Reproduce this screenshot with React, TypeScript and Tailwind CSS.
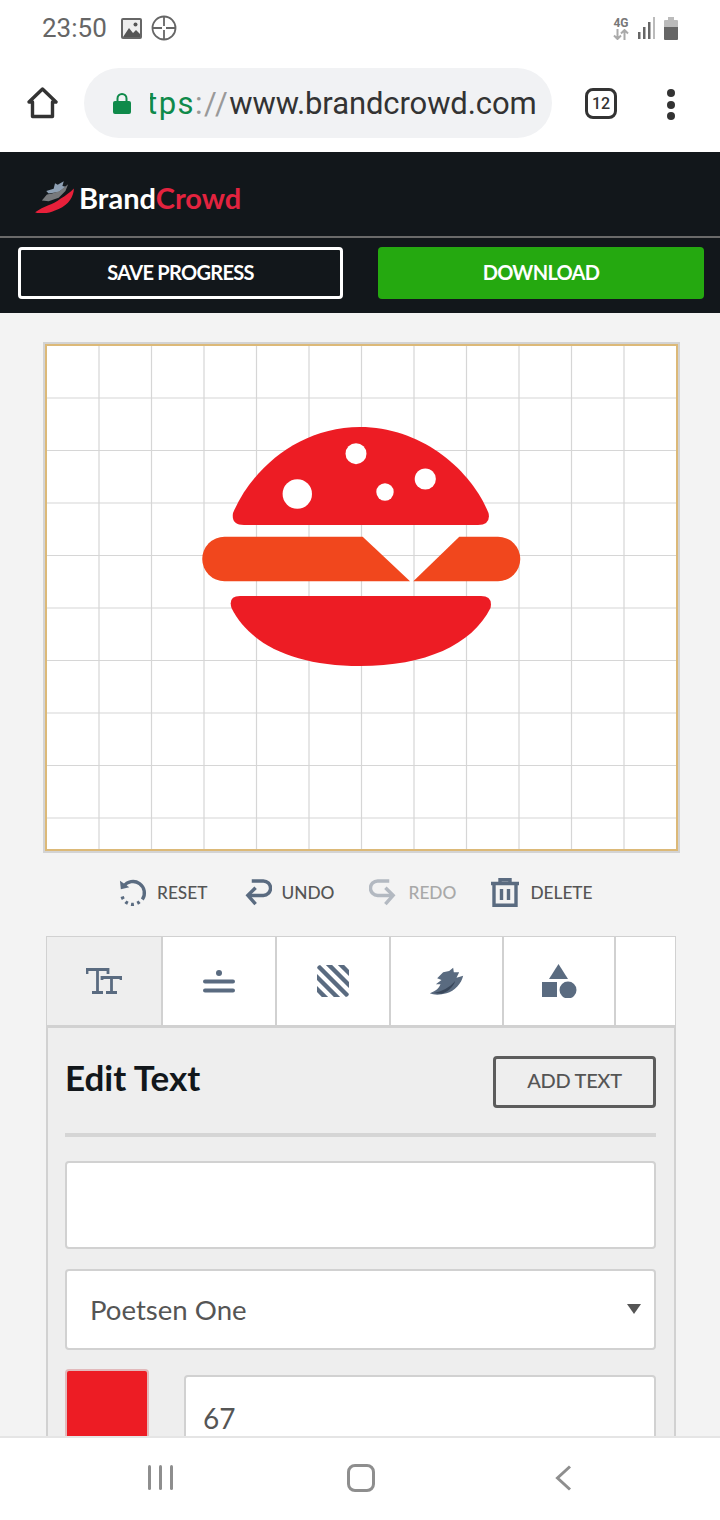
const gridX = [99, 151.5, 204, 256.5, 309, 361.5, 414, 466.5, 519, 571.5, 624]
const gridY = [398, 450.5, 503, 555.5, 608, 660.5, 713, 765.5, 818]

function Burger() {
  return (
    <svg viewBox="47 346 629 503" className="block h-full w-full">
      {gridX.map((x) => (
        <line key={x} x1={x} x2={x} y1={346} y2={849} stroke="#d6d6d6" strokeWidth={1.2} />
      ))}
      {gridY.map((y) => (
        <line key={y} x1={47} x2={676} y1={y} y2={y} stroke="#d6d6d6" strokeWidth={1.2} />
      ))}
      <path d="M244 525 Q231 525 233 513 C252 468 300 427 360 427 C420 427 470 468 488.5 513 Q491 525 478 525 Z" fill="#ed1c24" />
      <circle cx={356} cy={453.7} r={10.5} fill="#fff" />
      <circle cx={297.3} cy={494} r={14.7} fill="#fff" />
      <circle cx={385} cy={492} r={8.7} fill="#fff" />
      <circle cx={425.3} cy={479} r={10.6} fill="#fff" />
      <path d="M224.5 536.7 H362.7 L410 581.3 H224.5 A22.3 22.3 0 0 1 224.5 536.7 Z" fill="#f1471d" />
      <path d="M459.3 536.7 H498 A22.3 22.3 0 0 1 498 581.3 H413.3 Z" fill="#f1471d" />
      <path d="M240 596 H481 Q493 596 490.5 608 C472 645 425 666 360 666 C295 666 250 645 231.5 608 Q228 596 240 596 Z" fill="#ed1c24" />
    </svg>
  )
}

function Feather() {
  return (
    <svg viewBox="58 56 104 84" className="h-[28px] w-[35px]">
      <path
        d="M60 135 C80 128 88 118 92 108 L78 108 L95 95 L82 90 L100 72 L118 68 L130 58 L132 72 L148 72 L140 88 L160 82 C155 105 135 128 110 135 C90 141 70 140 60 135 Z"
        fill="#5a6b80"
      />
      <path d="M72 134 C95 130 120 118 136 98 C130 118 112 132 95 136 Z" fill="#39475a" />
    </svg>
  )
}

function ToolAction({ label, dim, gap, children }: { label: string; dim?: boolean; gap: string; children: React.ReactNode }) {
  return (
    <div className={`flex items-center ${gap}`}>
      {children}
      <span className={`mt-[2px] text-[17.3px] font-medium ${dim ? "text-[#a9a9a9]" : "text-[#555]"}`}>{label}</span>
    </div>
  )
}

export default function App() {
  return (
    <div className="flex h-[1520px] w-[720px] flex-col overflow-hidden bg-[#f3f3f3] font-['Lato',sans-serif]">
      {/* phone status bar */}
      <div className="flex h-[56px] shrink-0 items-center bg-white pl-[42px] pr-[42px]">
        <span className="font-['Roboto',sans-serif] text-[26px] text-[#666]">23:50</span>
        <svg viewBox="0 0 21 21" className="ml-[14px] h-[21px] w-[21px]">
          <rect width="21" height="21" rx="2" fill="#666" />
          <rect x="2" y="2" width="17" height="17" fill="#eee" />
          <path d="M2 19 L8 10 L12 15 L15 12 L19 16 V19 Z" fill="#555" />
          <circle cx="14.5" cy="6.5" r="2" fill="#555" />
        </svg>
        <svg viewBox="0 0 26 26" className="ml-[9px] h-[26px] w-[26px]" fill="none" stroke="#666" strokeWidth="1.8">
          <circle cx="13" cy="13" r="11.5" />
          <path d="M13 1 V11 M13 15 V25 M1 13 H11 M15 13 H25" />
        </svg>
        <div className="ml-auto flex items-center">
          <div className="flex flex-col items-center leading-none">
            <span className="font-['Roboto',sans-serif] text-[12px] font-bold leading-[12px] text-[#777]">4G</span>
            <svg viewBox="0 0 16 11" className="h-[11px] w-[16px]" fill="none" stroke="#aaa" strokeWidth="2">
              <path d="M4.5 0 V10 M1 6.5 L4.5 10 L8 6.5 M11.5 11 V1 M8 4.5 L11.5 1 L15 4.5" />
            </svg>
          </div>
          <svg viewBox="0 0 18 22" className="ml-[8px] h-[22px] w-[18px]">
            <rect x="1" y="15" width="2.5" height="7" fill="#666" />
            <rect x="6" y="10" width="2.5" height="12" fill="#666" />
            <rect x="11" y="5" width="2.5" height="17" fill="#666" />
            <rect x="16" y="0" width="2" height="22" fill="#bbb" />
          </svg>
          <svg viewBox="0 0 14 23" className="ml-[9px] h-[23px] w-[14px]">
            <path d="M4 0 H10 V3 H13 Q14 3 14 4 V10 H0 V4 Q0 3 1 3 H4 Z" fill="#bbb" />
            <path d="M0 10 H14 V22 Q14 23 13 23 H1 Q0 23 0 22 Z" fill="#666" />
          </svg>
        </div>
      </div>

      {/* browser toolbar */}
      <div className="flex h-[96px] shrink-0 items-start bg-white pt-[12px]">
        <svg viewBox="0 0 32 32" className="ml-[27px] mt-[19px] h-[32px] w-[32px]" fill="none" stroke="#333" strokeWidth="3.4" strokeLinejoin="round">
          <path d="M2 15 L15.5 2 L29 15 H25.5 V29.5 H5.5 V15 Z" />
        </svg>
        <div className="ml-[25px] flex h-[70px] w-[468px] items-center overflow-hidden rounded-[35px] bg-[#f1f2f4] pl-[29px]">
          <svg viewBox="0 0 18 21" className="h-[21px] w-[18px] shrink-0">
            <path d="M4.5 9 V5.5 A4.5 4.5 0 0 1 13.5 5.5 V9" fill="none" stroke="#0f8a4a" strokeWidth="2" />
            <rect x="0" y="8" width="18" height="13" rx="2" fill="#0f8a4a" />
          </svg>
          <div className="ml-[19px] overflow-hidden pt-[2px]">
            <span className="-ml-[3px] block whitespace-nowrap font-['Roboto',sans-serif] text-[31px] tracking-[-0.1px] text-[#333]">
              <span className="tracking-[1.5px] text-[#0f8a4a]">tps</span>
              <span className="tracking-[1.5px] text-[#999]">://</span>
              www.brandcrowd.com
            </span>
          </div>
        </div>
        <div className="ml-[33px] mt-[20px] flex h-[31px] w-[32px] items-center justify-center rounded-[8px] border-[3px] border-[#333] font-['Roboto',sans-serif] text-[16px] font-medium text-[#333]">
          12
        </div>
        <div className="ml-[50px] mt-[21px] flex flex-col gap-[3.5px]">
          <span className="h-[8px] w-[8px] rounded-full bg-[#333]" />
          <span className="h-[8px] w-[8px] rounded-full bg-[#333]" />
          <span className="h-[8px] w-[8px] rounded-full bg-[#333]" />
        </div>
      </div>

      {/* brandcrowd header */}
      <div className="shrink-0 bg-[#12171b]">
        <div className="flex h-[86px] items-center border-b-2 border-[#6a6a6a] pl-[35px] pt-[6px]">
          <svg viewBox="45 35 115 95" className="h-[32px] w-[39px] shrink-0">
            <path d="M78 65 L100 58 L104 42 L112 46 L130 36 L126 50 L136 52 L115 68 L85 72 Z" fill="#8ea0b4" />
            <path d="M65 93 L80 75 L95 72 L118 65 L143 45 L135 65 L115 85 L85 95 Z" fill="#77797c" />
            <path d="M45 128 C70 110 100 105 120 88 C135 78 150 68 160 57 C160 80 145 105 115 118 C90 130 65 135 45 128 Z" fill="#e8203a" />
          </svg>
          <span className="ml-[5px] text-[29px] font-bold leading-none text-white">
            Brand<span className="text-[#e2233f]">Crowd</span>
          </span>
        </div>
        <div className="flex items-start justify-between pb-[14px] pl-[18px] pr-[16px] pt-[9px]">
          <button className="h-[52px] w-[325px] rounded-[4px] border-[3px] border-white pb-[2px] text-[20px] font-bold tracking-[-0.7px] text-white">
            SAVE PROGRESS
          </button>
          <button className="h-[52px] w-[326px] rounded-[4px] bg-[#25a910] pb-[2px] text-[20px] font-bold tracking-[-0.7px] text-white">
            DOWNLOAD
          </button>
        </div>
      </div>

      {/* editor */}
      <div className="min-h-0 flex-1 overflow-hidden">
        <div className="ml-[45px] mt-[31px] h-[507px] w-[633px] border-2 border-[#dcb978] bg-white ring-2 ring-[#d3d3d3]">
          <Burger />
        </div>

        <div className="ml-[119px] mt-[26px] flex h-[30px] items-center">
          <ToolAction label="RESET" gap="gap-[10px]">
            <svg viewBox="0 0 30 28" className="h-[28px] w-[28px]" fill="none" stroke="#5a6b80" strokeWidth="3.6">
              <path d="M5 8 A11.5 11.5 0 1 1 25 22" />
              <path d="M1 2 L2 11 L11 9 Z" fill="#5a6b80" stroke="none" />
              <path d="M22 24.5 A11.5 11.5 0 0 1 3 16" strokeDasharray="3 3.6" />
            </svg>
          </ToolAction>
          <div className="ml-[37px]">
            <ToolAction label="UNDO" gap="gap-[10px]">
              <svg viewBox="0 0 28 28" className="h-[27px] w-[27px]" fill="none" stroke="#5a6b80" strokeWidth="3.6">
                <path d="M7 2 H19 A7.5 7.5 0 0 1 19 17 H4" />
                <path d="M11 9 L3 17 L11 26" />
              </svg>
            </ToolAction>
          </div>
          <div className="ml-[35px]">
            <ToolAction label="REDO" dim gap="gap-[12px]">
              <svg viewBox="0 0 28 28" className="h-[27px] w-[27px]" fill="none" stroke="#b3b9c1" strokeWidth="3.6">
                <path d="M21 2 H9 A7.5 7.5 0 0 0 9 17 H24" />
                <path d="M17 9 L25 17 L17 26" />
              </svg>
            </ToolAction>
          </div>
          <div className="ml-[35px]">
            <ToolAction label="DELETE" gap="gap-[11px]">
              <svg viewBox="0 0 28 29" className="h-[29px] w-[28px]" fill="none" stroke="#5a6b80" strokeWidth="3.4">
                <path d="M0 5.5 H28 M9 5 V1.7 H19 V5 M3 6 V27.3 H25 V6" />
                <path d="M10.5 11 V22 M17.5 11 V22" />
              </svg>
            </ToolAction>
          </div>
        </div>

        <div className="ml-[46px] mt-[29px] w-[630px]">
          <div className="flex h-[90px] border border-[#d1d1d1] bg-white">
            <div className="flex w-[116px] items-center justify-center border-r-2 border-[#d1d1d1] bg-[#eeeeee]">
              <svg viewBox="0 0 36 26" className="h-[26px] w-[36px]" fill="none" stroke="#5a6b80" strokeWidth="2.8">
                <path d="M1 6 V1.5 H22 V6 M11.5 1.5 V24.5 M6 24.5 H17 M16 12 V9.5 H35 V12 M25.5 9.5 V24.5 M20 24.5 H31" />
              </svg>
            </div>
            <div className="flex w-[114px] items-center justify-center border-r-2 border-[#d1d1d1]">
              <svg viewBox="0 0 32 23" className="h-[23px] w-[32px]" fill="#5a6b80">
                <circle cx="16" cy="3" r="3" />
                <rect x="0" y="9.5" width="32" height="4" rx="2" />
                <rect x="0" y="18.5" width="32" height="4" rx="2" />
              </svg>
            </div>
            <div className="flex w-[114px] items-center justify-center border-r-2 border-[#d1d1d1]">
              <svg viewBox="0 0 32 32" className="h-[32px] w-[32px]" fill="none" stroke="#5a6b80" strokeWidth="4.4">
                <clipPath id="stripes">
                  <rect width="32" height="32" rx="4" />
                </clipPath>
                <path clipPath="url(#stripes)" d="M-5 -5 L37 37 M-5 7 L37 49 M-5 -17 L37 25 M-5 19 L37 61 M-5 -29 L37 13" />
              </svg>
            </div>
            <div className="flex w-[113px] items-center justify-center border-r-2 border-[#d1d1d1]">
              <Feather />
            </div>
            <div className="flex w-[112px] items-center justify-center border-r-2 border-[#d1d1d1]">
              <svg viewBox="0 0 36 34" className="h-[34px] w-[36px]" fill="#5a6b80">
                <path d="M17.5 0 L27 15 H8 Z" />
                <rect x="1" y="18" width="15" height="15" />
                <circle cx="27" cy="26" r="8.5" />
              </svg>
            </div>
            <div className="flex-1" />
          </div>

          <div className="h-[420px] border-x-2 border-t-2 border-[#d1d1d1] bg-[#eeeeee] pl-[17px] pr-[18px] pt-[28px]">
            <div className="flex items-start justify-between">
              <h2 className="-mt-[1px] text-[35px] font-bold leading-[44px] text-[#12171b]">Edit Text</h2>
              <button className="h-[52px] w-[163px] rounded-[4px] border-[3px] border-[#5c5c5c] pb-[4px] text-[20px] font-medium tracking-[-0.3px] text-[#555]">
                ADD TEXT
              </button>
            </div>
            <div className="mt-[25px] h-[4px] bg-[#d5d5d5]" />
            <input className="mt-[24px] block h-[88px] w-full rounded-[4px] border-2 border-[#d1d1d1] bg-white" />
            <div className="relative mt-[20px]">
              <select className="block h-[81px] w-full appearance-none rounded-[4px] border-2 border-[#d1d1d1] bg-white pl-[23px] text-[27.6px] text-[#555]">
                <option>Poetsen One</option>
              </select>
              <svg viewBox="0 0 14 10" className="absolute right-[15px] top-[35px] h-[10px] w-[14px]" fill="#555">
                <path d="M0 0 H14 L7 10 Z" />
              </svg>
            </div>
            <div className="mt-[19px] flex items-start">
              <div className="h-[90px] w-[84px] rounded-[4px] border-2 border-[#e2b9bb] bg-[#ed1c24]" />
              <input
                readOnly
                value="67"
                className="ml-[35px] mt-[6px] block h-[86px] min-w-0 flex-1 rounded-[4px] border-2 border-[#d1d1d1] bg-white pl-[17px] text-[28px] text-[#555]"
              />
            </div>
          </div>
        </div>
      </div>

      {/* phone nav bar */}
      <div className="flex h-[84px] shrink-0 items-center border-t-2 border-[#e5e5e5] bg-white pb-[3px]">
        <div className="ml-[148px] flex gap-[8px]">
          <span className="h-[25px] w-[3px] rounded-sm bg-[#8e8e8e]" />
          <span className="h-[25px] w-[3px] rounded-sm bg-[#8e8e8e]" />
          <span className="h-[25px] w-[3px] rounded-sm bg-[#8e8e8e]" />
        </div>
        <div className="ml-[174px] h-[28px] w-[28px] rounded-[8px] border-[3px] border-[#8e8e8e]" />
        <svg viewBox="0 0 17 26" className="ml-[180px] h-[26px] w-[17px]" fill="none" stroke="#8e8e8e" strokeWidth="3">
          <path d="M15 1.5 L2.5 13 L15 24.5" />
        </svg>
      </div>
    </div>
  )
}
